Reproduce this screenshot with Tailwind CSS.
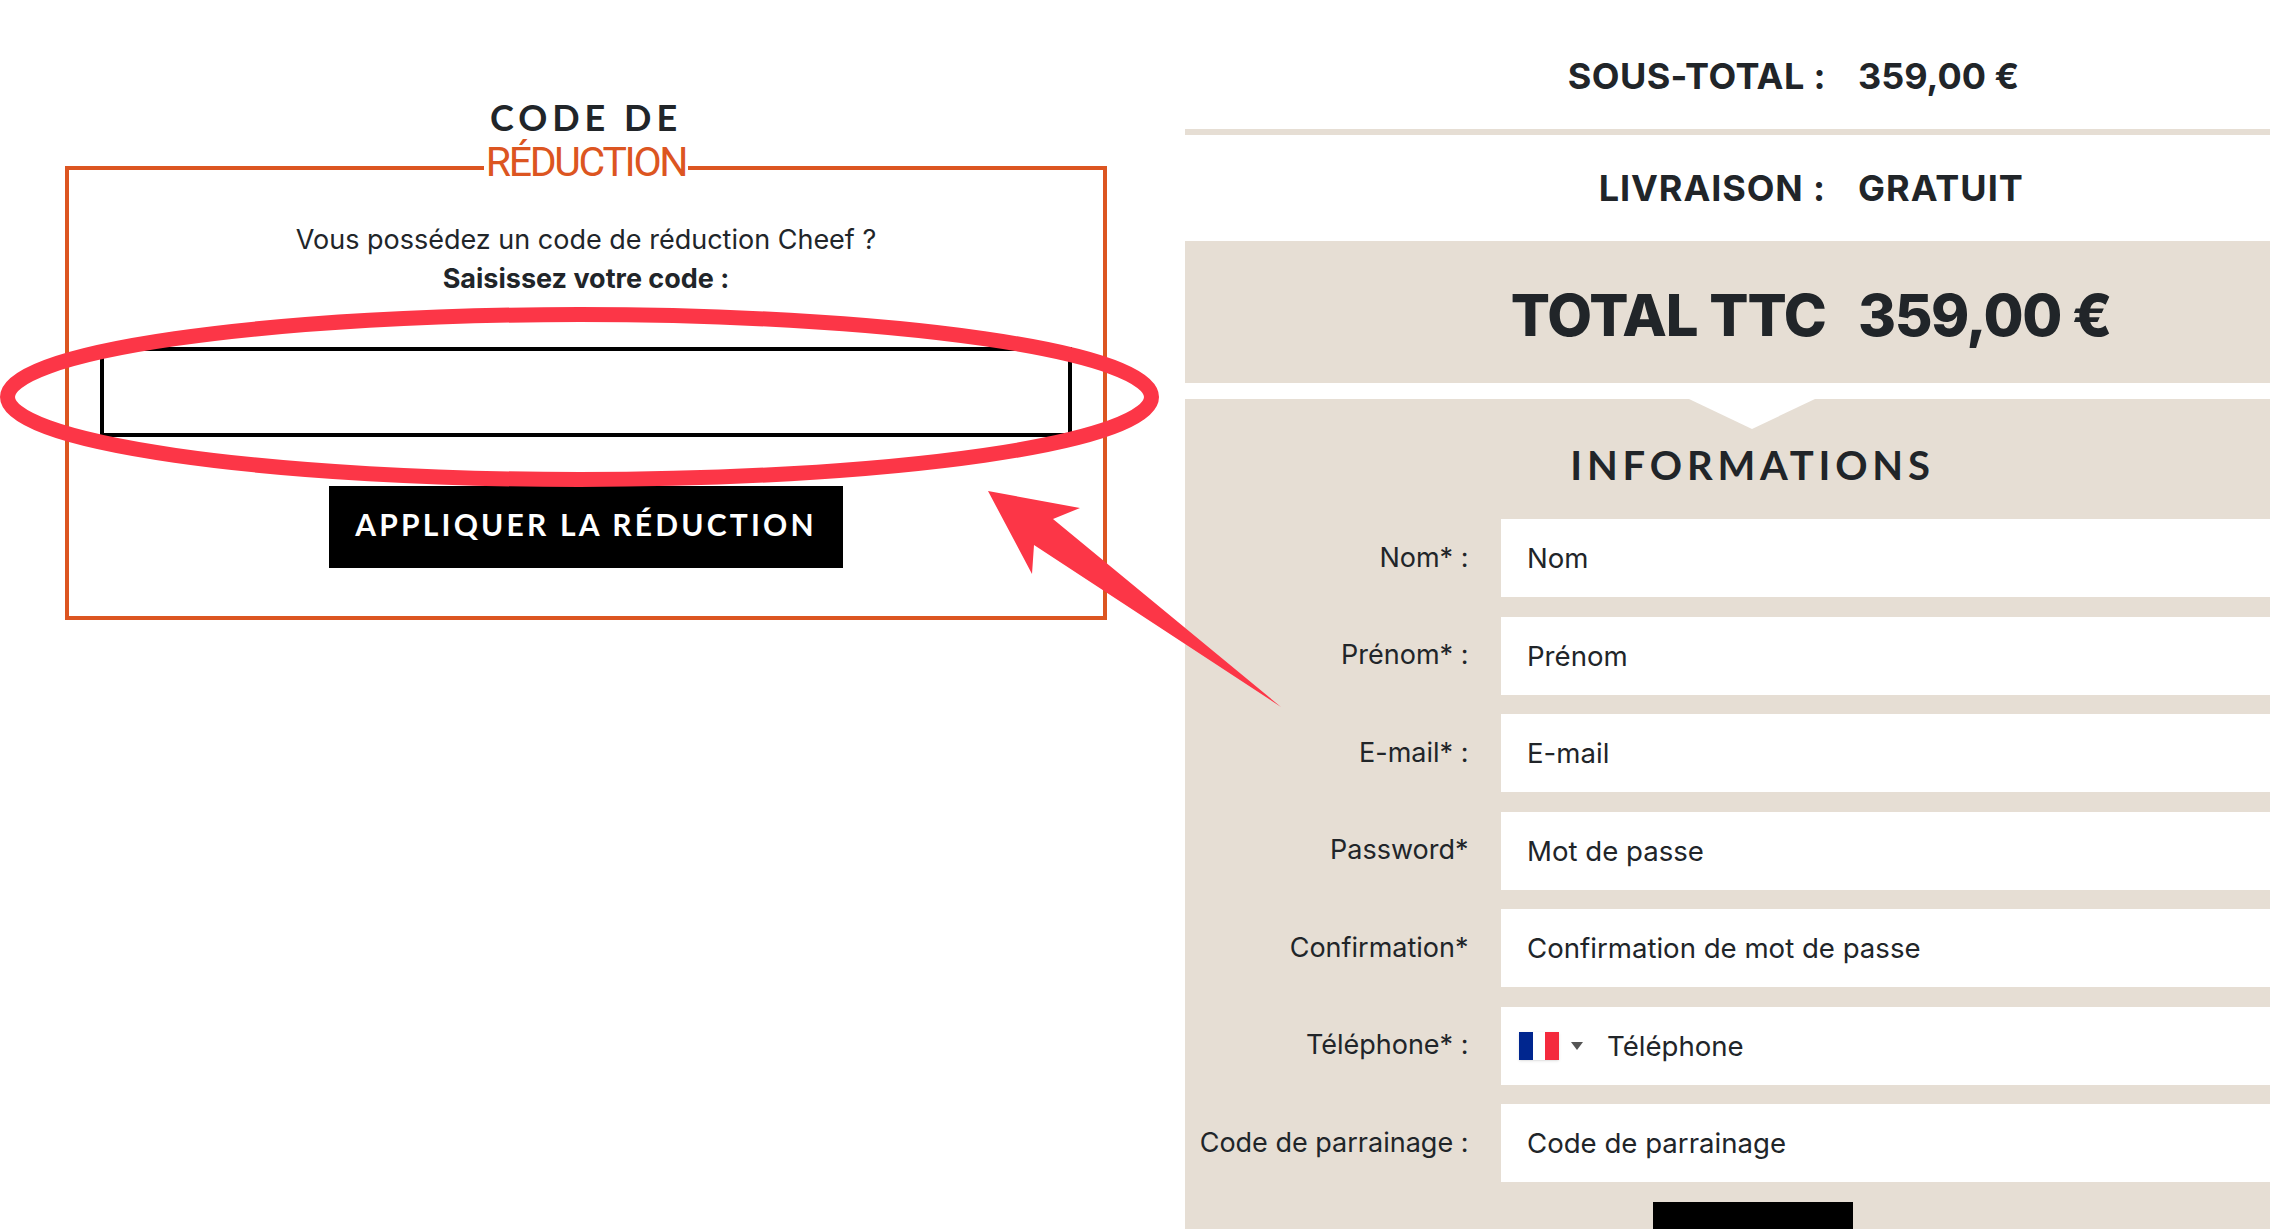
<!DOCTYPE html>
<html lang="fr">
<head>
  <meta charset="UTF-8">
  <meta name="viewport" content="width=device-width, initial-scale=1.0">
  <title>Code de réduction</title>
  <script src="https://cdn.jsdelivr.net/npm/@tailwindcss/browser@4"></script>
</head>
<body class="bg-white">
  <div class="relative flex h-[1229px] w-[2270px] overflow-hidden font-[Inter,sans-serif] text-[#212529]">

    <!-- Colonne gauche : code de réduction -->
    <div class="w-[1185px] shrink-0 pl-[65px] pr-[78px] pt-[99px]">
      <div class="relative z-10 flex flex-col items-center">
        <h2 class="font-[Lato,sans-serif] text-[36px] font-bold leading-[36px] tracking-[5px]">CODE DE</h2>
        <span class="mt-[6px] h-[42px] bg-white px-[2px] font-[Roboto,sans-serif] text-[41px] leading-[42px] tracking-[-2.3px] text-[#dc5521]">RÉDUCTION</span>
      </div>
      <div class="-mt-[17px] flex h-[454px] flex-col items-center border-4 border-[#dc5521] px-[31px] pt-[50px]">
        <p class="text-[27px] leading-[39px]">Vous possédez un code de réduction Cheef ?</p>
        <p class="text-[27px] font-bold leading-[39px]">Saisissez votre code :</p>
        <input type="text" class="mt-[49px] h-[90px] w-full shrink-0 border-[4px] border-black bg-white">
        <button class="mt-[49px] h-[82px] w-[514px] bg-black pb-[5px] font-[Lato,sans-serif] text-[30px] font-bold tracking-[3.2px] text-white">APPLIQUER LA RÉDUCTION</button>
      </div>
    </div>

    <!-- Colonne droite : récapitulatif et informations -->
    <div class="w-[1135px] shrink-0">
      <div class="grid h-[129px] grid-cols-[641px_1fr] items-center gap-x-[32px] pt-[23px] text-[36px] font-bold">
        <span class="text-right tracking-[0.4px]">SOUS-TOTAL :</span>
        <span>359,00 €</span>
      </div>
      <div class="h-[6px] bg-[#e6ded4]"></div>
      <div class="grid h-[106px] grid-cols-[641px_1fr] items-center gap-x-[32px] text-[36px] font-bold">
        <span class="text-right tracking-[0.9px]">LIVRAISON :</span>
        <span class="tracking-[1px]">GRATUIT</span>
      </div>
      <div class="grid h-[142px] grid-cols-[641px_1fr] items-center gap-x-[32px] bg-[#e6ded4] pt-[7px] text-[58px] font-extrabold">
        <span class="text-right tracking-[-1px]">TOTAL TTC</span>
        <span class="tracking-[-1.4px]">359,00 €</span>
      </div>

      <div class="relative mt-[16px] h-[900px] bg-[#e6ded4]">
        <!-- Encoche -->
        <svg class="absolute left-[504px] top-0" width="126" height="30" viewBox="0 0 126 30"><polygon points="0,0 126,0 63,30" fill="#fff"/></svg>
        <h2 class="pt-[46px] text-center font-[Lato,sans-serif] text-[40px] font-bold leading-[40px] tracking-[4.8px]">INFORMATIONS</h2>

        <form class="mt-[34px] flex flex-col gap-[19.5px] text-[27px]">
          <div class="flex items-center gap-[32.5px]">
            <label class="w-[283.5px] shrink-0 text-right">Nom* :</label>
            <input placeholder="Nom" class="h-[78px] flex-1 bg-white px-[26px] text-[27.6px] placeholder:text-[#212529]">
          </div>
          <div class="flex items-center gap-[32.5px]">
            <label class="w-[283.5px] shrink-0 text-right">Prénom* :</label>
            <input placeholder="Prénom" class="h-[78px] flex-1 bg-white px-[26px] text-[27.6px] placeholder:text-[#212529]">
          </div>
          <div class="flex items-center gap-[32.5px]">
            <label class="w-[283.5px] shrink-0 text-right">E-mail* :</label>
            <input placeholder="E-mail" class="h-[78px] flex-1 bg-white px-[26px] text-[27.6px] placeholder:text-[#212529]">
          </div>
          <div class="flex items-center gap-[32.5px]">
            <label class="w-[283.5px] shrink-0 text-right">Password*</label>
            <input placeholder="Mot de passe" class="h-[78px] flex-1 bg-white px-[26px] text-[27.6px] placeholder:text-[#212529]">
          </div>
          <div class="flex items-center gap-[32.5px]">
            <label class="w-[283.5px] shrink-0 text-right">Confirmation*</label>
            <input placeholder="Confirmation de mot de passe" class="h-[78px] flex-1 bg-white px-[26px] text-[27.6px] placeholder:text-[#212529]">
          </div>
          <div class="flex items-center gap-[32.5px]">
            <label class="w-[283.5px] shrink-0 text-right">Téléphone* :</label>
            <div class="flex h-[78px] flex-1 items-center bg-white pl-[18px]">
              <svg width="40" height="28" viewBox="0 0 40 28" class="shadow-sm">
                <rect width="14" height="28" fill="#00268f"/>
                <rect x="14" width="12" height="28" fill="#fff"/>
                <rect x="26" width="14" height="28" fill="#f42a3d"/>
              </svg>
              <svg width="12" height="8" viewBox="0 0 12 8" class="ml-[12px]"><polygon points="0,0 12,0 6,8" fill="#555"/></svg>
              <input placeholder="Téléphone" class="ml-[24px] h-full flex-1 bg-transparent text-[27.6px] placeholder:text-[#212529]">
            </div>
          </div>
          <div class="flex items-center gap-[32.5px]">
            <label class="w-[283.5px] shrink-0 text-right">Code de parrainage :</label>
            <input placeholder="Code de parrainage" class="h-[78px] flex-1 bg-white px-[26px] text-[27.6px] placeholder:text-[#212529]">
          </div>
          <button type="button" class="mx-auto h-[70px] w-[200px] bg-black"></button>
        </form>
      </div>
    </div>

    <!-- Annotation : ellipse et flèche rouges par-dessus la capture -->
    <svg class="pointer-events-none absolute left-0 top-0 z-20" width="2270" height="1229" viewBox="0 0 2270 1229">
      <ellipse cx="579.5" cy="397" rx="572" ry="82.5" fill="none" stroke="#fc3647" stroke-width="15"/>
      <polygon points="988,491 1080,508 1053,519 1281,707 1034,545 1032,574" fill="#fc3647"/>
    </svg>
  </div>
</body>
</html>
